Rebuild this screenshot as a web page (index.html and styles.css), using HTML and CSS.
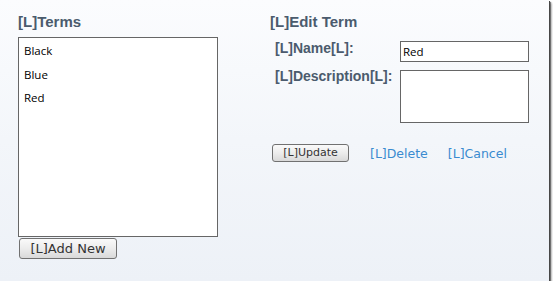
FILE: index.html
```html
<!DOCTYPE html>
<html>
<head>
<meta charset="utf-8">
<link rel="stylesheet" href="styles.css">
</head>
<body>
<div class="panel">
  <div class="col-left">
    <h2 class="heading">[L]Terms</h2>
    <div class="listbox">
      <div class="item">Black</div>
      <div class="item">Blue</div>
      <div class="item">Red</div>
    </div>
    <button class="btn btn-add">[L]Add New</button>
  </div>
  <div class="col-right">
    <h2 class="heading">[L]Edit Term</h2>
    <div class="form">
      <label class="label">[L]Name[L]:</label>
      <div class="input">Red</div>
      <label class="label">[L]Description[L]:</label>
      <div class="textarea"></div>
    </div>
    <div class="actions">
      <button class="btn btn-update">[L]Update</button>
      <a class="link" href="#">[L]Delete</a>
      <a class="link" href="#">[L]Cancel</a>
    </div>
  </div>
</div>
</body>
</html>
```
FILE: styles.css
```css
html, body {
  margin: 0;
  padding: 0;
  background: #ffffff;
}

.panel {
  width: 549px;
  height: 281px;
  box-sizing: border-box;
  background: linear-gradient(to bottom, #fbfcfe 0%, #f3f6fa 50%, #edf1f7 100%);
  box-shadow: 1px 1px 0 #474747, 2px 2px 1px rgba(0,0,0,0.45), 3px 3px 2px rgba(0,0,0,0.22);
  display: flex;
  gap: 52px;
  padding: 13px 0 0 18px;
}

.heading {
  margin: 0;
  font-family: "Liberation Sans", Arial, sans-serif;
  font-weight: bold;
  font-size: 15px;
  line-height: 17px;
  color: #4b5b6d;
}

.col-left {
  width: 200px;
  display: flex;
  flex-direction: column;
  align-items: flex-start;
}

.col-left .heading {
  margin-bottom: 7px;
}

.listbox {
  width: 200px;
  height: 200px;
  box-sizing: border-box;
  border: 1px solid #666666;
  background: #ffffff;
  padding: 1px 5px;
}

.item {
  font-family: "Open Sans", sans-serif;
  font-size: 11.5px;
  line-height: 23.5px;
  color: #000000;
}

.btn {
  font-family: "DejaVu Sans", Verdana, sans-serif;
  color: #333333;
  background: linear-gradient(to bottom, #fafafa 0%, #ececec 50%, #d9d9d9 100%);
  border: 1px solid #717171;
  border-radius: 3px;
  padding: 0;
  margin: 0;
  box-sizing: border-box;
  cursor: pointer;
}

.btn-add {
  width: 98px;
  height: 21px;
  margin: 1px 0 0 1px;
  font-size: 13px;
  line-height: 19px;
}

.col-right {
  display: flex;
  flex-direction: column;
  align-items: flex-start;
}

.col-right .heading {
  margin-bottom: 10px;
}

.form {
  display: grid;
  grid-template-columns: 125px 129px;
  row-gap: 6px;
  margin-left: 5px;
}

.label {
  font-family: "Liberation Sans", Arial, sans-serif;
  font-weight: bold;
  font-size: 14px;
  line-height: 16px;
  color: #4b5b6d;
}

.input {
  height: 21px;
  margin-top: 1px;
  box-sizing: border-box;
  border: 1px solid #666666;
  background: #ffffff;
  padding: 0 2px;
  font-family: "Open Sans", sans-serif;
  font-size: 11.5px;
  line-height: 19px;
  color: #000000;
}

.textarea {
  height: 53px;
  margin-top: 2px;
  box-sizing: border-box;
  border: 1px solid #666666;
  background: #ffffff;
}

.actions {
  display: flex;
  align-items: center;
  margin: 21px 0 0 2px;
}

.btn-update {
  width: 77px;
  height: 18px;
  font-size: 11px;
  line-height: 16px;
  margin-right: 21px;
}

.link {
  font-family: "DejaVu Sans", Verdana, sans-serif;
  font-size: 12.5px;
  line-height: 15px;
  color: #3a8bd0;
  text-decoration: none;
  margin-right: 20px;
}
```
